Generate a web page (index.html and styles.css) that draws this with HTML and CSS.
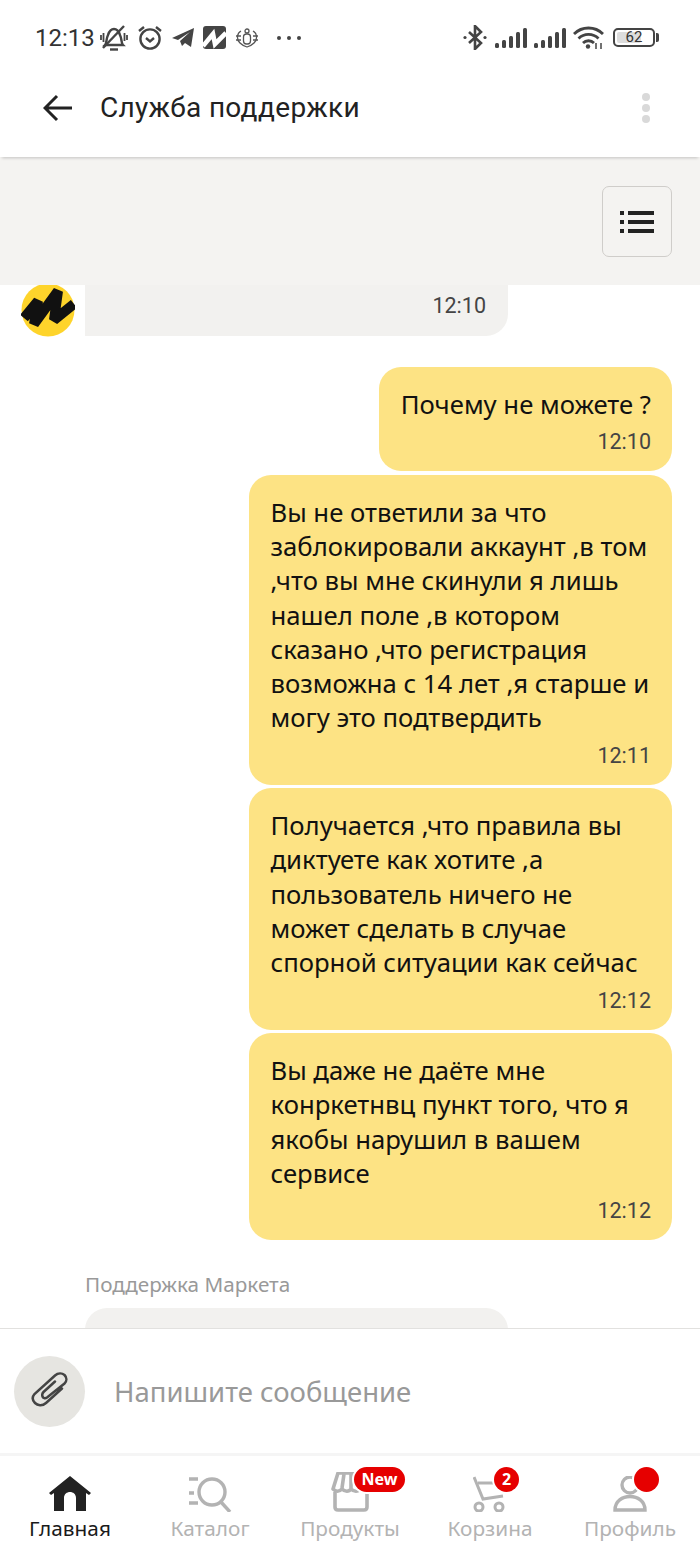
FILE: index.html
```html
<!DOCTYPE html>
<html lang="ru">
<head>
    <meta charset="utf-8">
    <title>Служба поддержки</title>
    <link rel="stylesheet" href="styles.css">
</head>
<body>
    <!-- Status bar -->
    <div class="status_bar">
        <div class="status_group">
            <span class="status_time">12:13</span>
            <svg width="28" height="26" viewBox="0 0 28 26" fill="none" stroke="#444" stroke-width="2.400">
                <path d="M5 20c2-2 1-6 3-10 1-3 3-6 6-6s5 3 6 6c2 4 1 8 3 10z"/>
                <path d="M10 24.500h8"/>
                <path d="M3 23L24 1"/>
                <path d="M1 10v5M3.500 8v9M24.500 8v8M27 10v5" stroke-width="1.800"/>
            </svg>
            <svg width="26" height="25" viewBox="0 0 26 25" fill="none" stroke="#444" stroke-width="2.400">
                <circle cx="13" cy="14" r="9.600"/>
                <path d="M9 13l4 3.400 4-3.400"/>
                <path d="M2 6l5-4M24 6l-5-4"/>
            </svg>
            <svg width="22" height="19" viewBox="0 0 22 19">
                <path fill="#444" d="M0 10L22 0l-3 19-6-4-3 3-2-5 10-9-12 8z"/>
            </svg>
            <svg width="23" height="23" viewBox="0 0 23 23">
                <rect width="23" height="23" rx="3" fill="#444"/>
                <path fill="none" stroke="#fff" stroke-width="4.600" d="M0 20L10 8l2 10L23 7"/>
            </svg>
            <svg width="24" height="20" viewBox="0 0 24 20" fill="none" stroke="#555" stroke-width="1.300">
                <rect x="8.500" y="6" width="7" height="10" rx="3"/>
                <circle cx="12" cy="3" r="2"/>
                <path d="M6 3C2 5 1 11 5 15c2 2 4 3 7 4 3-1 5-2 7-4 4-4 3-10-1-12"/>
                <path d="M1 8h5M1 12h5M18 8h5M18 12h5"/>
            </svg>
            <div class="status_dots"><i></i><i></i><i></i></div>
        </div>
        <div class="status_group status_right">
            <svg class="ic_bt" width="24" height="25" viewBox="0 0 24 25" fill="none" stroke="#444" stroke-width="2.600">
                <path d="M6 7l12 11-6 6V1l6 6L6 18"/>
                <circle cx="2" cy="12.500" r="1.600" fill="#444" stroke="none"/>
                <circle cx="22" cy="12.500" r="1.600" fill="#444" stroke="none"/>
            </svg>
            <svg width="32" height="20" viewBox="0 0 32 20" fill="#444">
                <rect x="0" y="15" width="4" height="5" rx="1.500"/>
                <rect x="7" y="12" width="4" height="8" rx="1.500"/>
                <rect x="14" y="8" width="4" height="12" rx="1.500"/>
                <rect x="21" y="4" width="4" height="16" rx="1.500"/>
                <rect x="28" y="0" width="4" height="20" rx="1.500"/>
            </svg>
            <svg width="32" height="20" viewBox="0 0 32 20" fill="#444">
                <rect x="0" y="15" width="4" height="5" rx="1.500"/>
                <rect x="7" y="12" width="4" height="8" rx="1.500"/>
                <rect x="14" y="8" width="4" height="12" rx="1.500"/>
                <rect x="21" y="4" width="4" height="16" rx="1.500"/>
                <rect x="28" y="0" width="4" height="20" rx="1.500"/>
            </svg>
            <svg width="31" height="23" viewBox="0 0 31 23" fill="none" stroke="#444" stroke-width="2.800">
                <path d="M1 8c8-8 21-8 29 0"/>
                <path d="M5.500 12.500c5.500-5.500 14.500-5.500 20 0"/>
                <path d="M10 17c3-3 8-3 11 0"/>
                <circle cx="15" cy="20.500" r="2.200" fill="#444" stroke="none"/>
                <path d="M23 17v6M28 17v6" stroke-width="1.500"/>
            </svg>
            <div class="battery">
                <div class="battery_body"><span class="battery_fill"></span><span class="battery_num">62</span></div>
                <div class="battery_nub"></div>
            </div>
        </div>
    </div>

    <!-- Header -->
    <header class="top_header">
        <svg width="30" height="28" viewBox="0 0 30 28" fill="none" stroke="#222" stroke-width="3">
            <path d="M29 14H3M14 2L2 14l12 12"/>
        </svg>
        <div class="top_title">Служба поддержки</div>
        <div class="menu_dots"><i></i><i></i><i></i></div>
    </header>

    <!-- Grey strip with list button -->
    <div class="filter_strip">
        <div class="list_btn">
            <svg width="34" height="24" viewBox="0 0 34 24" fill="#222">
                <rect x="0" y="1" width="4" height="4"/>
                <rect x="8" y="1" width="26" height="4"/>
                <rect x="0" y="10" width="4" height="4"/>
                <rect x="8" y="10" width="26" height="4"/>
                <rect x="0" y="19" width="4" height="4"/>
                <rect x="8" y="19" width="26" height="4"/>
            </svg>
        </div>
    </div>

    <!-- Messages -->
    <main class="chat">
        <div class="incoming_row">
            <svg class="avatar" width="54" height="54" viewBox="0 0 54 54">
                <circle cx="27" cy="26" r="26.500" fill="#fed42b"/>
                <path fill="none" stroke="#111" stroke-width="10" stroke-linejoin="bevel" d="M3 34L17 17 13 40 37 7 33 36 53 20"/>
            </svg>
            <div class="bubble_in bubble_cut">
                <div class="msg_time">12:10</div>
            </div>
        </div>

        <div class="out_list">
            <div class="bubble_out">
                <div class="msg_text">Почему не можете ?</div>
                <div class="msg_time">12:10</div>
            </div>
            <div class="bubble_out bubble_wide">
                <div class="msg_text">Вы не ответили за что заблокировали аккаунт ,в том ,что вы мне скинули я лишь нашел поле ,в котором сказано ,что регистрация возможна с 14 лет ,я старше и могу это подтвердить</div>
                <div class="msg_time">12:11</div>
            </div>
            <div class="bubble_out bubble_wide">
                <div class="msg_text">Получается ,что правила вы диктуете как хотите ,а пользователь ничего не может сделать в случае спорной ситуации как сейчас</div>
                <div class="msg_time">12:12</div>
            </div>
            <div class="bubble_out bubble_wide">
                <div class="msg_text">Вы даже не даёте мне конркетнвц пункт того, что я якобы нарушил в вашем сервисе</div>
                <div class="msg_time">12:12</div>
            </div>
        </div>

        <div class="sender_name">Поддержка Маркета</div>
        <div class="bubble_in bubble_open"></div>
    </main>

    <!-- Input -->
    <div class="input_row">
        <div class="attach_btn">
            <svg width="38" height="38" viewBox="0 0 38 38" fill="none" stroke="#444" stroke-width="2.500" stroke-linecap="round">
                <path d="M31 16.500L15 31C11 34.500 6.500 33.500 4 31 1.500 28.500 1 25 3.500 22L24 3.500C27 1 31 1 33.500 3 36 5.500 36 9 33.500 11.500L16 25.500C14 27 12 26 11.500 24.500 11 23 11 21.500 12.500 20L24 9.500"/>
            </svg>
        </div>
        <div class="input_hint">Напишите сообщение</div>
    </div>

    <!-- Bottom navigation -->
    <nav class="bottom_nav">
        <div class="nav_item nav_active">
            <svg width="42" height="36" viewBox="0 0 42 36">
                <path fill="#222" d="M21 0l21 17-2 2-3-2v18H27V22c0-8-12-8-12 0v13H5V17l-3 2-2-2z"/>
            </svg>
            <div class="nav_label">Главная</div>
        </div>
        <div class="nav_item">
            <svg width="44" height="36" viewBox="0 0 44 36" fill="none" stroke="#b3b3b3" stroke-width="3.400">
                <path d="M1 3h9M1 17h5M1 27h9"/>
                <circle cx="24" cy="16" r="13"/>
                <path d="M33 26l9 10"/>
            </svg>
            <div class="nav_label">Каталог</div>
        </div>
        <div class="nav_item">
            <svg width="40" height="40" viewBox="0 0 40 40" fill="none" stroke="#b3b3b3" stroke-width="3.600">
                <path stroke-linejoin="round" d="M5 20v15c0 2 1 3 3 3h26c2 0 3-1 3-3V18"/>
                <path stroke-linejoin="round" d="M8 1h26l4 16c-3 3-6 3-8 0-2 3-6 3-9 0-2 3-6 3-9 0-3 3-6 3-9 0z"/>
                <path d="M14 2l-2 14M21 2v14M28 2l2 14"/>
            </svg>
            <div class="nav_label">Продукты</div>
            <div class="badge badge_new">New</div>
        </div>
        <div class="nav_item">
            <svg width="34" height="36" viewBox="0 0 34 36" fill="none" stroke="#b3b3b3" stroke-width="3">
                <path d="M1 1l9 22 20-3"/>
                <path d="M5 7h15"/>
                <circle cx="6" cy="31" r="4"/>
                <circle cx="26" cy="31" r="4"/>
            </svg>
            <div class="nav_label">Корзина</div>
            <div class="badge badge_num">2</div>
        </div>
        <div class="nav_item">
            <svg width="34" height="36" viewBox="0 0 34 36" fill="none" stroke="#b3b3b3" stroke-width="3.400">
                <circle cx="17" cy="9" r="8"/>
                <path d="M2 34c0-18 30-18 30 0z"/>
            </svg>
            <div class="nav_label">Профиль</div>
            <div class="badge badge_dot"></div>
        </div>
    </nav>
</body>
</html>
```

FILE: styles.css
```css
/* Base */
html, body {
    margin: 0;
    padding: 0;
    height: 100%;
    background: #fff;
    color: #1f1f1f;
    font-family: "Noto Sans", Roboto, sans-serif;
}

body {
    display: flex;
    flex-direction: column;
    height: 1556px;
    overflow: hidden;
}

/* Status bar */
.status_bar {
    flex: none;
    height: 72px;
    padding: 3px 41px 0 35px;
    display: flex;
    justify-content: space-between;
    align-items: center;
    box-sizing: border-box;
}

.status_group {
    display: flex;
    align-items: center;
    gap: 9px;
}

.status_time {
    font-family: Roboto, sans-serif;
    font-size: 24px;
    color: #333;
    width: 58px;
    margin-right: -2px;
}

.status_dots {
    display: flex;
    gap: 6px;
    margin-left: 9px;
}

.status_dots i {
    width: 4px;
    height: 4px;
    border-radius: 50%;
    background: #444;
}

.status_right {
    gap: 7px;
}

.ic_bt {
    margin-right: 1px;
}

.battery {
    display: flex;
    align-items: center;
    gap: 1px;
    margin-left: 2px;
}

.battery_body {
    position: relative;
    width: 38px;
    height: 15px;
    border: 2px solid #444;
    border-radius: 5px;
    font-family: Roboto, sans-serif;
    font-size: 15px;
    line-height: 15px;
    text-align: center;
    color: #333;
}

.battery_fill {
    position: absolute;
    left: 2px;
    top: 2px;
    bottom: 2px;
    width: 62%;
    background: #ddd;
    border-radius: 2px;
}

.battery_num {
    position: relative;
}

.battery_nub {
    width: 3px;
    height: 9px;
    background: #444;
    border-radius: 0 2px 2px 0;
}

/* Header */
.top_header {
    flex: none;
    position: relative;
    z-index: 2;
    height: 85px;
    display: flex;
    align-items: center;
    padding: 0 50px 14px 43px;
    box-sizing: border-box;
    box-shadow: 0 3px 3px -2px rgba(0, 0, 0, 0.2);
    background: #fff;
}

.top_title {
    flex: 1;
    margin-left: 27px;
    font-family: Roboto, sans-serif;
    font-size: 28px;
    letter-spacing: 0.3px;
    color: #222;
}

.menu_dots {
    display: flex;
    flex-direction: column;
    gap: 3px;
}

.menu_dots i {
    width: 8px;
    height: 8px;
    border-radius: 50%;
    background: #d9d9d9;
}

/* Strip */
.filter_strip {
    flex: none;
    height: 128px;
    background: #f4f3f1;
    display: flex;
    justify-content: flex-end;
    padding: 29px 28px 0 0;
    box-sizing: border-box;
}

.list_btn {
    width: 70px;
    height: 71px;
    box-sizing: border-box;
    border: 1.500px solid #cfcdca;
    border-radius: 7px;
    display: flex;
    align-items: center;
    justify-content: center;
}

/* Chat */
.chat {
    flex: 1;
    min-height: 0;
    overflow: hidden;
    padding-right: 28px;
}

.incoming_row {
    display: flex;
    align-items: flex-start;
    padding-left: 21px;
    gap: 10px;
}

.avatar {
    flex: none;
    margin: -1px 0 -2px;
}

.bubble_in {
    background: #f2f1ef;
    width: 423px;
}

.bubble_cut {
    height: 51px;
    box-sizing: border-box;
    border-radius: 0 0 22px 0;
    padding: 8px 22px 0 0;
}

.out_list {
    margin-top: 31px;
    display: flex;
    flex-direction: column;
    align-items: flex-end;
    gap: 3.400px;
}

.bubble_out {
    background: #fde384;
    border-radius: 22px;
    padding: 21px 21px 16px 21.500px;
    box-sizing: border-box;
}

.bubble_wide {
    width: 423px;
}

.msg_text {
    font-size: 25.700px;
    line-height: 34.300px;
    color: #111;
}

.msg_time {
    text-align: right;
    font-family: Roboto, sans-serif;
    font-size: 21.500px;
    line-height: 26px;
    color: #444;
    margin-top: 7px;
}

.bubble_cut .msg_time {
    margin-top: 0;
}

.sender_name {
    margin: 31px 0 0 85px;
    font-size: 20.700px;
    line-height: 26px;
    color: #999;
}

.bubble_open {
    margin: 11px 0 0 85px;
    height: 80px;
    border-radius: 22px 22px 0 0;
}

/* Input */
.input_row {
    flex: none;
    height: 125px;
    border-top: 1.500px solid #e2e1df;
    box-sizing: border-box;
    display: flex;
    align-items: center;
    padding-left: 14px;
    gap: 29px;
    background: #fff;
}

.attach_btn {
    width: 71px;
    height: 71px;
    border-radius: 50%;
    background: #e6e5e1;
    display: flex;
    align-items: center;
    justify-content: center;
}

.input_hint {
    font-size: 27.500px;
    color: #999;
}

/* Bottom nav */
.bottom_nav {
    flex: none;
    height: 103px;
    border-top: 3px solid #f5f5f5;
    box-sizing: border-box;
    display: grid;
    grid-template-columns: repeat(5, 1fr);
    background: #fff;
}

.nav_item {
    position: relative;
    height: 100px;
    display: flex;
    flex-direction: column;
    align-items: center;
    justify-content: flex-end;
    padding-bottom: 15px;
    box-sizing: border-box;
}

.nav_label {
    font-size: 20.800px;
    line-height: 26px;
    margin-top: 3px;
    color: #b3b3b3;
}

.nav_active .nav_label {
    color: #1a1a1a;
}

.badge {
    position: absolute;
    top: 11px;
    height: 25px;
    border-radius: 13px;
    background: #e60000;
    color: #fff;
    font-size: 16px;
    font-weight: 700;
    line-height: 24px;
    text-align: center;
    box-shadow: 0 0 0 2px #fff;
}

.badge_new {
    left: 74px;
    width: 51px;
}

.badge_num {
    left: 74px;
    width: 25px;
}

.badge_dot {
    left: 74px;
    width: 25px;
}
```
